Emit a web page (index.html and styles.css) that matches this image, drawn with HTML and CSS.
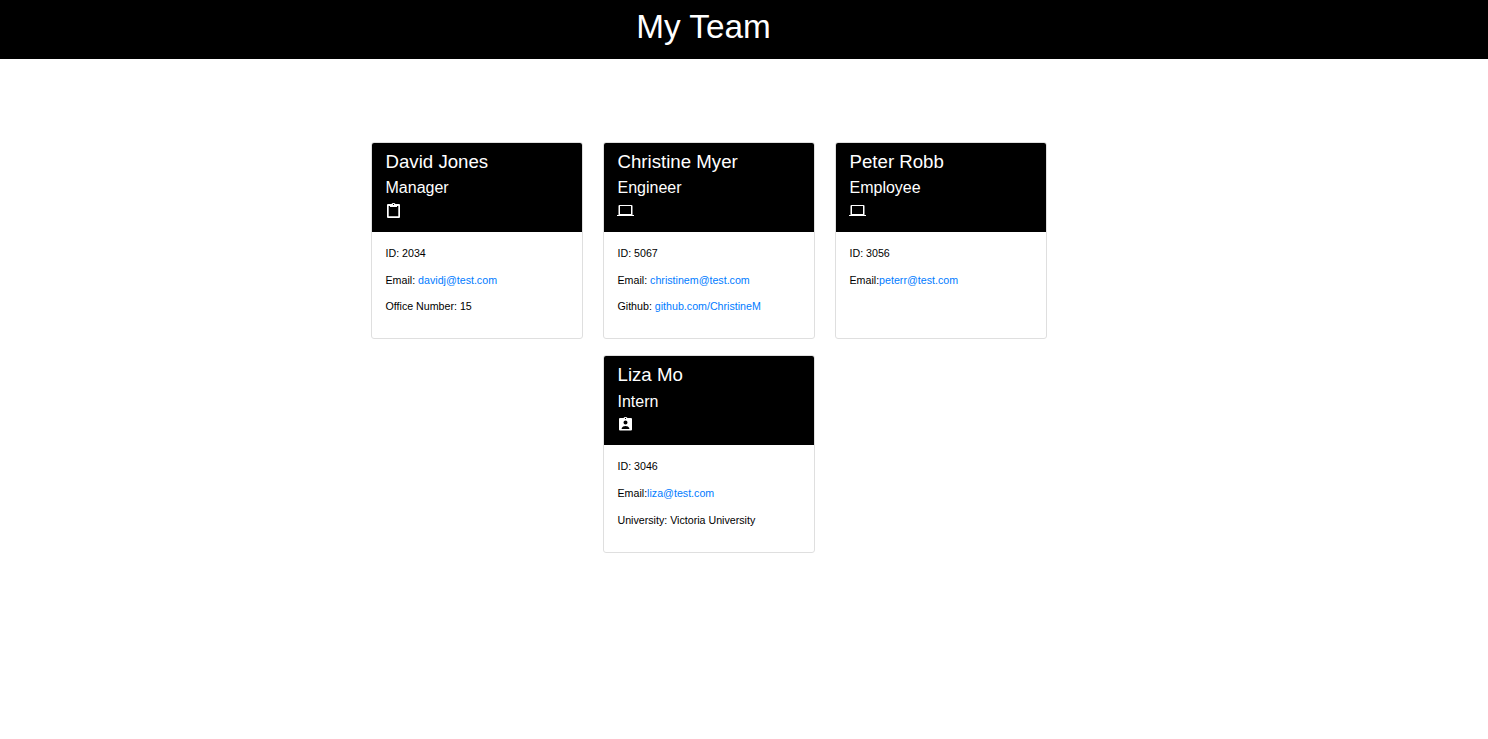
FILE: index.html
```html
<!DOCTYPE html>
<html lang="en">
<head>
<meta charset="utf-8">
<title>My Team</title>
<link rel="stylesheet" href="styles.css">
</head>
<body>
<header class="banner"><h1 class="title">My Team</h1></header>
<main class="team">
  <section class="card">
    <div class="card-header">
      <h2 class="name">David Jones</h2>
      <h3 class="role">Manager</h3>
      <svg class="icon" viewBox="0 0 17 17"><path fill-rule="evenodd" d="M3 2H6.500Q7 1 8.500 1T10.500 2H14Q15 2 15 3V15Q15 16 14 16H3Q2 16 2 15V3Q2 2 3 2ZM3.700 4V14.200H13.300V4H12V5H5V4ZM8 2V3H9V2Z"/></svg>
    </div>
    <div class="card-body">
      <p class="detail">ID: 2034</p>
      <p class="detail">Email: <a class="link" href="mailto:davidj@test.com">davidj@test.com</a></p>
      <p class="detail">Office Number: 15</p>
    </div>
  </section>
  <section class="card">
    <div class="card-header">
      <h2 class="name">Christine Myer</h2>
      <h3 class="role">Engineer</h3>
      <svg class="icon" viewBox="0 0 17 17"><path fill-rule="evenodd" d="M2.500 3H14.500Q15.500 3 15.500 4V13H17V14H0V13H1.500V4Q1.500 3 2.500 3ZM3 4V12H14V4Z"/></svg>
    </div>
    <div class="card-body">
      <p class="detail">ID: 5067</p>
      <p class="detail">Email: <a class="link" href="mailto:christinem@test.com">christinem@test.com</a></p>
      <p class="detail">Github: <a class="link" href="#">github.com/ChristineM</a></p>
    </div>
  </section>
  <section class="card">
    <div class="card-header">
      <h2 class="name">Peter Robb</h2>
      <h3 class="role">Employee</h3>
      <svg class="icon" viewBox="0 0 17 17"><path fill-rule="evenodd" d="M2.500 3H14.500Q15.500 3 15.500 4V13H17V14H0V13H1.500V4Q1.500 3 2.500 3ZM3 4V12H14V4Z"/></svg>
    </div>
    <div class="card-body">
      <p class="detail">ID: 3056</p>
      <p class="detail">Email:<a class="link" href="mailto:peterr@test.com">peterr@test.com</a></p>
    </div>
  </section>
  <section class="card card-center">
    <div class="card-header">
      <h2 class="name">Liza Mo</h2>
      <h3 class="role">Intern</h3>
      <svg class="icon" viewBox="0 0 17 17"><path fill-rule="evenodd" d="M3 2H6.500Q7 1 8.500 1T10.500 2H14Q15 2 15 3V13.500Q15 14.500 14 14.500H3Q2 14.500 2 13.500V3Q2 2 3 2ZM8 2V3H9V2ZM8.500 4.500A2 2 0 0 0 8.500 8.500A2 2 0 0 0 8.500 4.500ZM4.700 13H12.300V12Q11.500 10 8.500 10T4.700 12Z"/></svg>
    </div>
    <div class="card-body">
      <p class="detail">ID: 3046</p>
      <p class="detail">Email:<a class="link" href="mailto:liza@test.com">liza@test.com</a></p>
      <p class="detail">University: Victoria University</p>
    </div>
  </section>
</main>
</body>
</html>
```
FILE: styles.css
```css
* { box-sizing: border-box; }
body {
  margin: 0;
  background: #fff;
  color: #000;
  font-family: "Liberation Sans", Arial, sans-serif;
}
.banner {
  height: 59px;
  padding: 7px 81px 0 0;
  background: #000;
  color: #fff;
  text-align: center;
}
.title {
  margin: 0;
  font-size: 33.3px;
  font-weight: 400;
  line-height: 40px;
}
.team {
  display: grid;
  grid-template-columns: repeat(3, 212px);
  column-gap: 20px;
  row-gap: 16.2px;
  padding: 83px 0 0 371px;
}
.card {
  height: 197.2px;
  border: 1px solid #dfdfdf;
  border-radius: 3px;
  overflow: hidden;
}
.card-center { grid-column: 2; }
.card-header {
  height: 89px;
  padding: 7px 13.5px 0;
  background: #000;
  color: #fff;
}
.name {
  margin: 0 0 5.3px;
  font-size: 18.667px;
  font-weight: 400;
  line-height: 23px;
}
.role {
  margin: 0 0 5px;
  font-size: 16px;
  font-weight: 400;
  line-height: 19px;
}
.icon {
  display: block;
  width: 17px;
  height: 17px;
  margin-left: -0.5px;
  fill: #fff;
}
.card-body { padding: 13px 13.5px 0; }
.detail {
  margin: 0 0 10.7px;
  font-size: 10.667px;
  line-height: 16px;
}
.link {
  color: #007bff;
  text-decoration: none;
}
```
